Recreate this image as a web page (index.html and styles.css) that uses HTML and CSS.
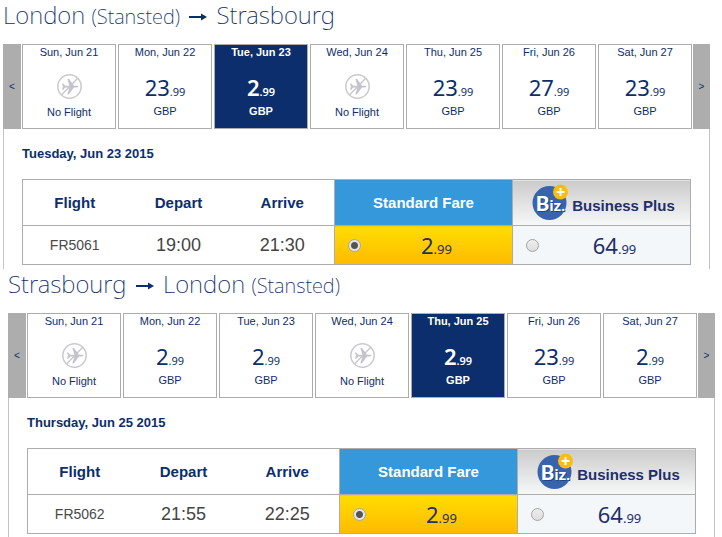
FILE: index.html
```html
<!DOCTYPE html>
<html lang="en">
<head>
    <meta charset="UTF-8">
    <meta name="viewport" content="width=device-width, initial-scale=1.0">
    <title>Select your flights</title>
    <link rel="stylesheet" href="styles.css">
</head>
<body>
    <!-- shared icons -->
    <svg class="sprite" aria-hidden="true">
        <symbol id="arrow" viewBox="0 0 18 10">
            <path d="M0 4h13V6H0z"/>
            <path d="M12 1.500L18 5l-6 3.500z"/>
        </symbol>
        <symbol id="no-flight" viewBox="0 0 25 25">
            <circle cx="12.500" cy="12.500" r="11.700" fill="none" stroke="#c9cacf" stroke-width="1.500"/>
            <path d="M4.500 21L21 4" stroke="#c9cacf" stroke-width="1.500"/>
            <path fill="#c3c4ca" d="M5 9.500h1.200l2 2.200h4.300L10.300 5H12l5 6.700h2.500c1.300 0 2 .4 2 .9s-.7.900-2 .9H17l-5 6.700h-1.700l2.200-6.700H8.200l-2 2.200H5l1-3.100z"/>
        </symbol>
        <symbol id="biz" viewBox="0 0 37 37">
            <circle cx="17.500" cy="19" r="17" fill="#3864ae"/>
            <text class="biz-shadow" x="5" y="28">B<tspan font-size="15">iz.</tspan></text>
            <text class="biz-text" x="4" y="27">B<tspan font-size="15">iz.</tspan></text>
            <circle cx="28.500" cy="8" r="7.500" fill="#f9bd12"/>
            <path d="M28.500 4v8M24.500 8h8" stroke="#fff" stroke-width="2"/>
        </symbol>
    </svg>

    <section class="trip outbound">
        <h2 class="route">London <small>(Stansted)</small> <svg class="arrow"><use href="#arrow"/></svg> Strasbourg</h2>
        <div class="dates">
            <button class="prev" type="button" aria-label="Previous days">&lt;</button>
            <div class="days">
                <a class="day" href="#"><span class="date">Sun, Jun 21</span><svg class="plane"><use href="#no-flight"/></svg><span class="none">No Flight</span></a>
                <a class="day" href="#"><span class="date">Mon, Jun 22</span><span class="price">23<small>.99</small></span><span class="currency">GBP</span></a>
                <a class="day selected" href="#"><span class="date">Tue, Jun 23</span><span class="price">2<small>.99</small></span><span class="currency">GBP</span></a>
                <a class="day" href="#"><span class="date">Wed, Jun 24</span><svg class="plane"><use href="#no-flight"/></svg><span class="none">No Flight</span></a>
                <a class="day" href="#"><span class="date">Thu, Jun 25</span><span class="price">23<small>.99</small></span><span class="currency">GBP</span></a>
                <a class="day" href="#"><span class="date">Fri, Jun 26</span><span class="price">27<small>.99</small></span><span class="currency">GBP</span></a>
                <a class="day" href="#"><span class="date">Sat, Jun 27</span><span class="price">23<small>.99</small></span><span class="currency">GBP</span></a>
            </div>
            <button class="next" type="button" aria-label="Next days">&gt;</button>
        </div>
        <div class="panel">
            <h3 class="full-date">Tuesday, Jun 23 2015</h3>
            <table class="flights">
                <colgroup><col class="col-info"><col class="col-info"><col class="col-info"><col class="col-fare"><col class="col-fare"></colgroup>
                <thead>
                    <tr>
                        <th>Flight</th>
                        <th>Depart</th>
                        <th>Arrive</th>
                        <th class="standard">Standard Fare</th>
                        <th class="business"><div class="biz-head"><svg class="biz"><use href="#biz"/></svg><span>Business Plus</span></div></th>
                    </tr>
                </thead>
                <tbody>
                    <tr>
                        <td class="number">FR5061</td>
                        <td class="time">19:00</td>
                        <td class="time">21:30</td>
                        <td class="standard"><label class="fare"><input type="radio" name="outbound" checked><span>2<small>.99</small></span></label></td>
                        <td class="business"><label class="fare"><input type="radio" name="outbound"><span>64<small>.99</small></span></label></td>
                    </tr>
                </tbody>
            </table>
        </div>
    </section>

    <section class="trip inbound">
        <h2 class="route">Strasbourg <svg class="arrow"><use href="#arrow"/></svg> London <small>(Stansted)</small></h2>
        <div class="dates">
            <button class="prev" type="button" aria-label="Previous days">&lt;</button>
            <div class="days">
                <a class="day" href="#"><span class="date">Sun, Jun 21</span><svg class="plane"><use href="#no-flight"/></svg><span class="none">No Flight</span></a>
                <a class="day" href="#"><span class="date">Mon, Jun 22</span><span class="price">2<small>.99</small></span><span class="currency">GBP</span></a>
                <a class="day" href="#"><span class="date">Tue, Jun 23</span><span class="price">2<small>.99</small></span><span class="currency">GBP</span></a>
                <a class="day" href="#"><span class="date">Wed, Jun 24</span><svg class="plane"><use href="#no-flight"/></svg><span class="none">No Flight</span></a>
                <a class="day selected" href="#"><span class="date">Thu, Jun 25</span><span class="price">2<small>.99</small></span><span class="currency">GBP</span></a>
                <a class="day" href="#"><span class="date">Fri, Jun 26</span><span class="price">23<small>.99</small></span><span class="currency">GBP</span></a>
                <a class="day" href="#"><span class="date">Sat, Jun 27</span><span class="price">2<small>.99</small></span><span class="currency">GBP</span></a>
            </div>
            <button class="next" type="button" aria-label="Next days">&gt;</button>
        </div>
        <div class="panel">
            <h3 class="full-date">Thursday, Jun 25 2015</h3>
            <table class="flights">
                <colgroup><col class="col-info"><col class="col-info"><col class="col-info"><col class="col-fare"><col class="col-fare"></colgroup>
                <thead>
                    <tr>
                        <th>Flight</th>
                        <th>Depart</th>
                        <th>Arrive</th>
                        <th class="standard">Standard Fare</th>
                        <th class="business"><div class="biz-head"><svg class="biz"><use href="#biz"/></svg><span>Business Plus</span></div></th>
                    </tr>
                </thead>
                <tbody>
                    <tr>
                        <td class="number">FR5062</td>
                        <td class="time">21:55</td>
                        <td class="time">22:25</td>
                        <td class="standard"><label class="fare"><input type="radio" name="inbound" checked><span>2<small>.99</small></span></label></td>
                        <td class="business"><label class="fare"><input type="radio" name="inbound"><span>64<small>.99</small></span></label></td>
                    </tr>
                </tbody>
            </table>
        </div>
    </section>
</body>
</html>
```

FILE: styles.css
```css
* {
    box-sizing: border-box;
}
body {
    margin: 0;
    background: white;
    color: #0c2e6c;
    font-family: "Liberation Sans", Arial, sans-serif;
    font-size: 11px;
}
.sprite {
    display: none;
}
.outbound {
    margin: 0 12px 0 3px;
}
.inbound {
    margin: 0 7px 0 8px;
}
.route {
    margin: 0;
    height: 44px;
    line-height: 30px;
    font-family: "Noto Sans", sans-serif;
    font-size: 24px;
    font-weight: 200;
    white-space: nowrap;
}
.route small {
    font-size: 20px;
    line-height: 1;
}
.arrow {
    width: 18px;
    height: 10px;
    margin: 0 3px;
    vertical-align: 2px;
    fill: #0c2e6c;
}
.dates {
    display: flex;
    gap: 1px;
    height: 85px;
}
.prev,
.next {
    width: 18px;
    padding: 0;
    border: none;
    background: #adadad;
    color: #0c2e6c;
    font-family: inherit;
    font-size: 10px;
    cursor: pointer;
}
.next {
    width: 17px;
}
.days {
    display: flex;
    flex: 1;
    gap: 2px;
}
.day {
    display: flex;
    flex: 1;
    flex-direction: column;
    align-items: center;
    border: 1px solid #adadad;
    color: #0c2e6c;
    text-decoration: none;
}
.day.selected {
    background: #0c2e6c;
    color: white;
    font-weight: bold;
}
.date {
    line-height: 15px;
}
.price {
    margin: 12px 0 1px;
    line-height: 30px;
    font-family: "Noto Sans", sans-serif;
    font-size: 22px;
}
.selected .price {
    font-weight: 600;
}
.price small {
    font-size: 11px;
    line-height: 1;
}
.plane {
    width: 25px;
    height: 25px;
    margin: 14px 0 5px;
}
.currency,
.none {
    line-height: 16px;
}
.panel {
    padding: 17px 18px 4px;
    border: solid #c4c4c4;
    border-width: 0 1px;
}
.inbound .panel {
    padding-bottom: 3px;
}
.full-date {
    margin: 0 0 17px;
    font-size: 13px;
    line-height: 16px;
}
.flights {
    width: 100%;
    border-collapse: collapse;
    table-layout: fixed;
    border: 1px solid #adadad;
    text-align: center;
}
.col-info {
    width: 104px;
}
.flights th,
.flights td {
    padding: 0;
}
.flights th {
    height: 46px;
    font-size: 15px;
}
.flights td {
    height: 39px;
    border-top: 1px solid #adadad;
}
.flights .standard {
    border-left: 1px solid #adadad;
    border-right: 1px solid #adadad;
}
.flights th.standard {
    background: #3498db;
    color: white;
}
.flights td.standard {
    background: linear-gradient(#ffdd00, #ffba00);
}
.flights th.business {
    background: linear-gradient(#cbcbcb, #f7f8f8);
    color: #1e2f6b;
}
.flights td.business {
    background: #f3f7f9;
}
.biz-head {
    display: flex;
    justify-content: center;
    align-items: center;
    gap: 3px;
    padding-left: 4px;
}
.biz-head span {
    padding-top: 5px;
}
.biz {
    width: 37px;
    height: 37px;
}
.biz-text,
.biz-shadow {
    font-family: "Roboto", sans-serif;
    font-size: 21px;
    font-weight: 700;
    fill: white;
}
.biz-shadow {
    fill: #1f4587;
}
.flights .number {
    color: #4a4a4a;
    font-size: 14px;
}
.flights .time {
    color: #444;
    font-size: 18px;
}
.fare {
    display: flex;
    align-items: center;
    padding-left: 13px;
    color: #1e2f6b;
    font-family: "Noto Sans", sans-serif;
    font-size: 22px;
    line-height: 30px;
}
.fare span {
    flex: 1;
}
.fare small {
    font-size: 13px;
    line-height: 1;
}
.fare input {
    appearance: none;
    width: 13px;
    height: 13px;
    margin: 0;
    border: 1px solid #a5a5a5;
    border-radius: 50%;
    background: linear-gradient(#eee, #ddd);
}
.fare input:checked {
    background: radial-gradient(circle, #555 3px, #e6e6e6 4px);
}
```
